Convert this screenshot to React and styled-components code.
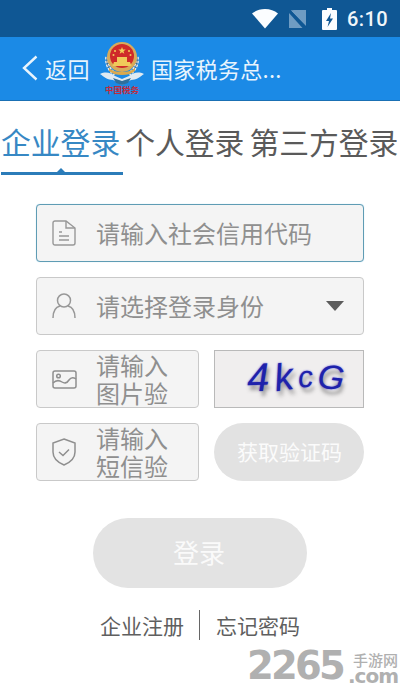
import styled, { createGlobalStyle } from 'styled-components';

const GlobalStyle = createGlobalStyle`
  html, body {
    margin: 0;
    padding: 0;
    background: #fff;
  }
  * {
    box-sizing: border-box;
  }
`;

const Page = styled.div`
  position: relative;
  width: 400px;
  height: 700px;
  overflow: hidden;
  background: #fff;
  font-family: 'Noto Sans CJK SC', 'Noto Sans', sans-serif;
`;

const StatusBar = styled.div`
  height: 37px;
  background: #0f5794;
  display: flex;
  align-items: center;
  justify-content: flex-end;
  padding-right: 12px;
`;

const StatusIcon = styled.svg`
  display: block;
  margin-right: ${(props) => props.$gap}px;
`;

const Clock = styled.span`
  font-family: Roboto, sans-serif;
  font-size: 20px;
  font-weight: 500;
  color: #f1f6fa;
  letter-spacing: 0.4px;
`;

const Header = styled.div`
  height: 64px;
  background: #1b8ae6;
  border-bottom: 1px solid #1a70b4;
  display: flex;
  align-items: center;
  padding: 0 0 1px 22px;
  color: #e8f4fd;
  font-size: 22px;
`;

const BackText = styled.span`
  margin-left: 7px;
  line-height: 1;
  letter-spacing: 0.5px;
`;

const Emblem = styled.div`
  width: 46px;
  margin-left: 9px;
  display: flex;
  flex-direction: column;
  align-items: center;
`;

const EmblemCaption = styled.span`
  margin-top: -1px;
  font-size: 8.5px;
  line-height: 9px;
  font-weight: 700;
  color: #c32a3a;
  white-space: nowrap;
`;

const Title = styled.span`
  margin-left: 6px;
  line-height: 1;
  white-space: nowrap;
  letter-spacing: 0.3px;
`;

const Tabs = styled.div`
  display: flex;
  gap: 5px;
  padding: 19px 0 0 1px;
`;

const Tab = styled.div`
  position: relative;
  height: 55px;
  font-size: 29.8px;
  line-height: 43px;
  white-space: nowrap;
  color: ${(props) => (props.$active ? '#3788c4' : '#5a5a5a')};

  ${(props) =>
    props.$active &&
    `
    &::after {
      content: '';
      position: absolute;
      left: 0;
      right: -3px;
      bottom: 0;
      height: 3px;
      background: #2b7cb9;
    }
    &::before {
      content: '';
      position: absolute;
      left: 56px;
      bottom: 3px;
      border-left: 4px solid transparent;
      border-right: 4px solid transparent;
      border-bottom: 4px solid #2b7cb9;
    }
  `}
`;

const Form = styled.div`
  display: flex;
  flex-direction: column;
  gap: 15px;
  padding: 29px 36px 0;
`;

const Row = styled.div`
  display: grid;
  grid-template-columns: 163px 150px;
  justify-content: space-between;
  height: 58px;
`;

const Field = styled.div`
  height: 58px;
  background: #f4f4f4;
  border: 1px solid ${(props) => (props.$focused ? '#5f9cb4' : '#c9c9c9')};
  border-radius: 4px;
  display: flex;
  align-items: center;
  padding-left: 15px;
  box-shadow: ${(props) => (props.$focused ? '0 0 1px #a6d3ea' : 'none')};
`;

const Placeholder = styled.span`
  margin-left: 20px;
  font-size: 24px;
  color: #8f8f8f;
  white-space: nowrap;
  line-height: 1;
`;

const WrappedPlaceholder = styled.span`
  margin-left: 19px;
  width: 72px;
  font-size: 24px;
  line-height: 28px;
  color: #8f8f8f;
`;

const Caret = styled.span`
  margin-left: auto;
  margin-right: 19px;
  border-left: 9px solid transparent;
  border-right: 9px solid transparent;
  border-top: 10px solid #5c5c5c;
`;

const Captcha = styled.div`
  height: 58px;
  background: #f0eeee;
  border: 1px solid #b9b9b9;
  display: flex;
  align-items: center;
  padding: 0 0 4px 32px;
  gap: 5px;
`;

const CaptchaChar = styled.span`
  font-family: 'Liberation Sans', sans-serif;
  font-style: italic;
  font-size: ${(props) => props.$size}px;
  line-height: 1;
  color: #1e22ab;
  text-shadow: 2px 5px 4px rgba(70, 70, 70, 0.5), 0 0 2px #5f62e0;
  transform: rotate(${(props) => props.$tilt}deg);
`;

const SmsButton = styled.div`
  height: 58px;
  border-radius: 29px;
  background: #e2e2e2;
  color: #fbfbfb;
  font-size: 21px;
  display: flex;
  align-items: center;
  justify-content: center;
  padding: 0 0 2px 1px;
`;

const LoginButton = styled.div`
  width: 214px;
  height: 70px;
  margin: 37px auto 0;
  border-radius: 35px;
  background: #e3e3e3;
  color: #fafafa;
  font-size: 26px;
  display: flex;
  align-items: center;
  justify-content: center;
  padding: 0 2px 3px 0;
`;

const Links = styled.div`
  display: flex;
  justify-content: center;
  align-items: center;
  margin-top: 22px;
  height: 30px;
  font-size: 21px;
  color: #5f5f5f;
`;

const LinkText = styled.span`
  width: 84px;
  white-space: nowrap;
`;

const Divider = styled.span`
  width: 1px;
  height: 30px;
  background: #666;
  margin: 0 16px 0 15px;
`;

const Watermark = styled.div`
  position: absolute;
  right: 2px;
  bottom: 16px;
  display: flex;
  align-items: flex-end;
  color: #b0b0b0;
  font-family: 'DejaVu Sans', sans-serif;
`;

const WatermarkNumber = styled.span`
  font-size: 38.5px;
  line-height: 36px;
  font-weight: 700;
  letter-spacing: -2.800px;
`;

const WatermarkSide = styled.div`
  display: flex;
  flex-direction: column;
  align-items: flex-end;
  margin-left: 5px;
`;

const WatermarkCn = styled.span`
  font-family: 'Noto Sans CJK SC', sans-serif;
  font-size: 15px;
  line-height: 16px;
  font-weight: 500;
`;

const WatermarkCom = styled.span`
  font-size: 20px;
  line-height: 16px;
  font-weight: 700;
  letter-spacing: -1px;
`;

const WifiIcon = () => (
  <StatusIcon $gap={11} width="26" height="20" viewBox="0 0 26 20">
    <path d="M13 19.500 0 4.500C3.500 1.500 8 0 13 0s9.500 1.500 13 4.500z" fill="#fbfdff" />
  </StatusIcon>
);

const SimIcon = () => (
  <StatusIcon $gap={15} width="18" height="18" viewBox="0 0 18 18">
    <path d="M5 0h12v16L1.500 .5z" fill="#6f9cc3" />
    <path d="M0 3l13.500 15H0z" fill="#6f9cc3" />
    <path d="M1 0l17 18" stroke="#0f5794" strokeWidth="1" />
  </StatusIcon>
);

const BatteryIcon = () => (
  <StatusIcon $gap={10} width="15" height="22" viewBox="0 0 15 22">
    <path d="M5 0h5v2h4a1 1 0 0 1 1 1v18a1 1 0 0 1-1 1H1a1 1 0 0 1-1-1V3a1 1 0 0 1 1-1h4z" fill="#fbfdff" />
    <path d="M9 5 4 13h3l-1.500 6L11 10.500H8z" fill="#0f5794" />
  </StatusIcon>
);

const BackIcon = () => (
  <svg width="16" height="26" viewBox="0 0 16 26" fill="none">
    <path d="M14.500 1.500 2 13l12.500 11.500" stroke="#e8f4fd" strokeWidth="2.400" />
  </svg>
);

const TaxEmblem = () => (
  <svg width="46" height="44" viewBox="0 0 46 44">
    <path d="M1 32c6-3 11-1 15 2l7 3 7-3c4-3 9-5 15-2-4 3-8 6-13 6l-9 5-9-5C9 38 5 35 1 32z" fill="#dfeaf2" />
    <path d="M14 36l9 3 9-3-3 5-6 2-6-2z" fill="#2f6f9c" />
    <path d="M8 15c-1 7 2 13 8 17M38 15c1 7-2 13-8 17" stroke="#e9eef2" strokeWidth="3.500" strokeDasharray="2.500 1.200" fill="none" />
    <path d="M8 15c-1 7 2 13 8 17M38 15c1 7-2 13-8 17" stroke="#4a5a63" strokeWidth="0.800" fill="none" />
    <circle cx="23" cy="15" r="15" fill="#d8ab5a" />
    <circle cx="23" cy="14" r="12" fill="#cf2a2a" />
    <path d="M23 5l1 2.600h2.700l-2.200 1.600.8 2.600-2.300-1.600-2.300 1.600.8-2.600-2.200-1.600H22z" fill="#f2cf58" />
    <circle cx="16" cy="9" r="1" fill="#f2cf58" />
    <circle cx="30" cy="9" r="1" fill="#f2cf58" />
    <circle cx="14.500" cy="13" r="1" fill="#f2cf58" />
    <circle cx="31.500" cy="13" r="1" fill="#f2cf58" />
    <path d="M15 20h16l1.500 4h-19zM18 15h10v5H18z" fill="#f0c95a" />
    <path d="M10 26c4 3 8 4 13 4s9-1 13-4v3c-4 3-8 4-13 4s-9-1-13-4z" fill="#d9a94f" />
  </svg>
);

const DocIcon = () => (
  <svg width="24" height="26" viewBox="0 0 24 26" fill="none" stroke="#989898" strokeWidth="1.400">
    <path d="M3 1h11l9 7v15a2 2 0 0 1-2 2H3a2 2 0 0 1-2-2V3a2 2 0 0 1 2-2z" />
    <path d="M14 1v7h9M7 12h3M7 16h10M7 20h10" />
  </svg>
);

const UserIcon = () => (
  <svg width="24" height="26" viewBox="0 0 24 26" fill="none" stroke="#989898" strokeWidth="1.500">
    <circle cx="12" cy="7.500" r="6.500" />
    <path d="M1 25c0-7 3-11 7-12M23 25c0-7-3-11-7-12" />
  </svg>
);

const PictureIcon = () => (
  <svg width="25" height="19" viewBox="0 0 25 19" fill="none" stroke="#8f8f8f" strokeWidth="1.500">
    <rect x="1" y="1" width="23" height="17" rx="2" />
    <circle cx="6.500" cy="6" r="1.800" />
    <path d="M1 13c3-3 6-3 9-1s5 1 7-2 4-3 7-1" />
  </svg>
);

const ShieldIcon = () => (
  <svg width="25" height="28" viewBox="0 0 25 28" fill="none" stroke="#8f8f8f" strokeWidth="1.500">
    <path d="M12 1l11 4v9c0 6-5 10.500-11 13C6 24.500 1 20 1 14V5z" />
    <path d="M7 14l4 3.500 6-6" />
  </svg>
);

const App = () => (
  <Page>
    <GlobalStyle />
    <StatusBar>
      <WifiIcon />
      <SimIcon />
      <BatteryIcon />
      <Clock>6:10</Clock>
    </StatusBar>
    <Header>
      <BackIcon />
      <BackText>返回</BackText>
      <Emblem>
        <TaxEmblem />
        <EmblemCaption>中国税务</EmblemCaption>
      </Emblem>
      <Title>国家税务总...</Title>
    </Header>
    <Tabs>
      <Tab $active>企业登录</Tab>
      <Tab>个人登录</Tab>
      <Tab>第三方登录</Tab>
    </Tabs>
    <Form>
      <Field $focused>
        <DocIcon />
        <Placeholder>请输入社会信用代码</Placeholder>
      </Field>
      <Field>
        <UserIcon />
        <Placeholder>请选择登录身份</Placeholder>
        <Caret />
      </Field>
      <Row>
        <Field>
          <PictureIcon />
          <WrappedPlaceholder>请输入图片验</WrappedPlaceholder>
        </Field>
        <Captcha>
          <CaptchaChar $size={40} $tilt={-2}>4</CaptchaChar>
          <CaptchaChar $size={38} $tilt={-8}>k</CaptchaChar>
          <CaptchaChar $size={30} $tilt={-6}>c</CaptchaChar>
          <CaptchaChar $size={34} $tilt={6}>G</CaptchaChar>
        </Captcha>
      </Row>
      <Row>
        <Field>
          <ShieldIcon />
          <WrappedPlaceholder>请输入短信验</WrappedPlaceholder>
        </Field>
        <SmsButton>获取验证码</SmsButton>
      </Row>
    </Form>
    <LoginButton>登录</LoginButton>
    <Links>
      <LinkText>企业注册</LinkText>
      <Divider />
      <LinkText>忘记密码</LinkText>
    </Links>
    <Watermark>
      <WatermarkNumber>2265</WatermarkNumber>
      <WatermarkSide>
        <WatermarkCn>手游网</WatermarkCn>
        <WatermarkCom>.com</WatermarkCom>
      </WatermarkSide>
    </Watermark>
  </Page>
);

export default App;
